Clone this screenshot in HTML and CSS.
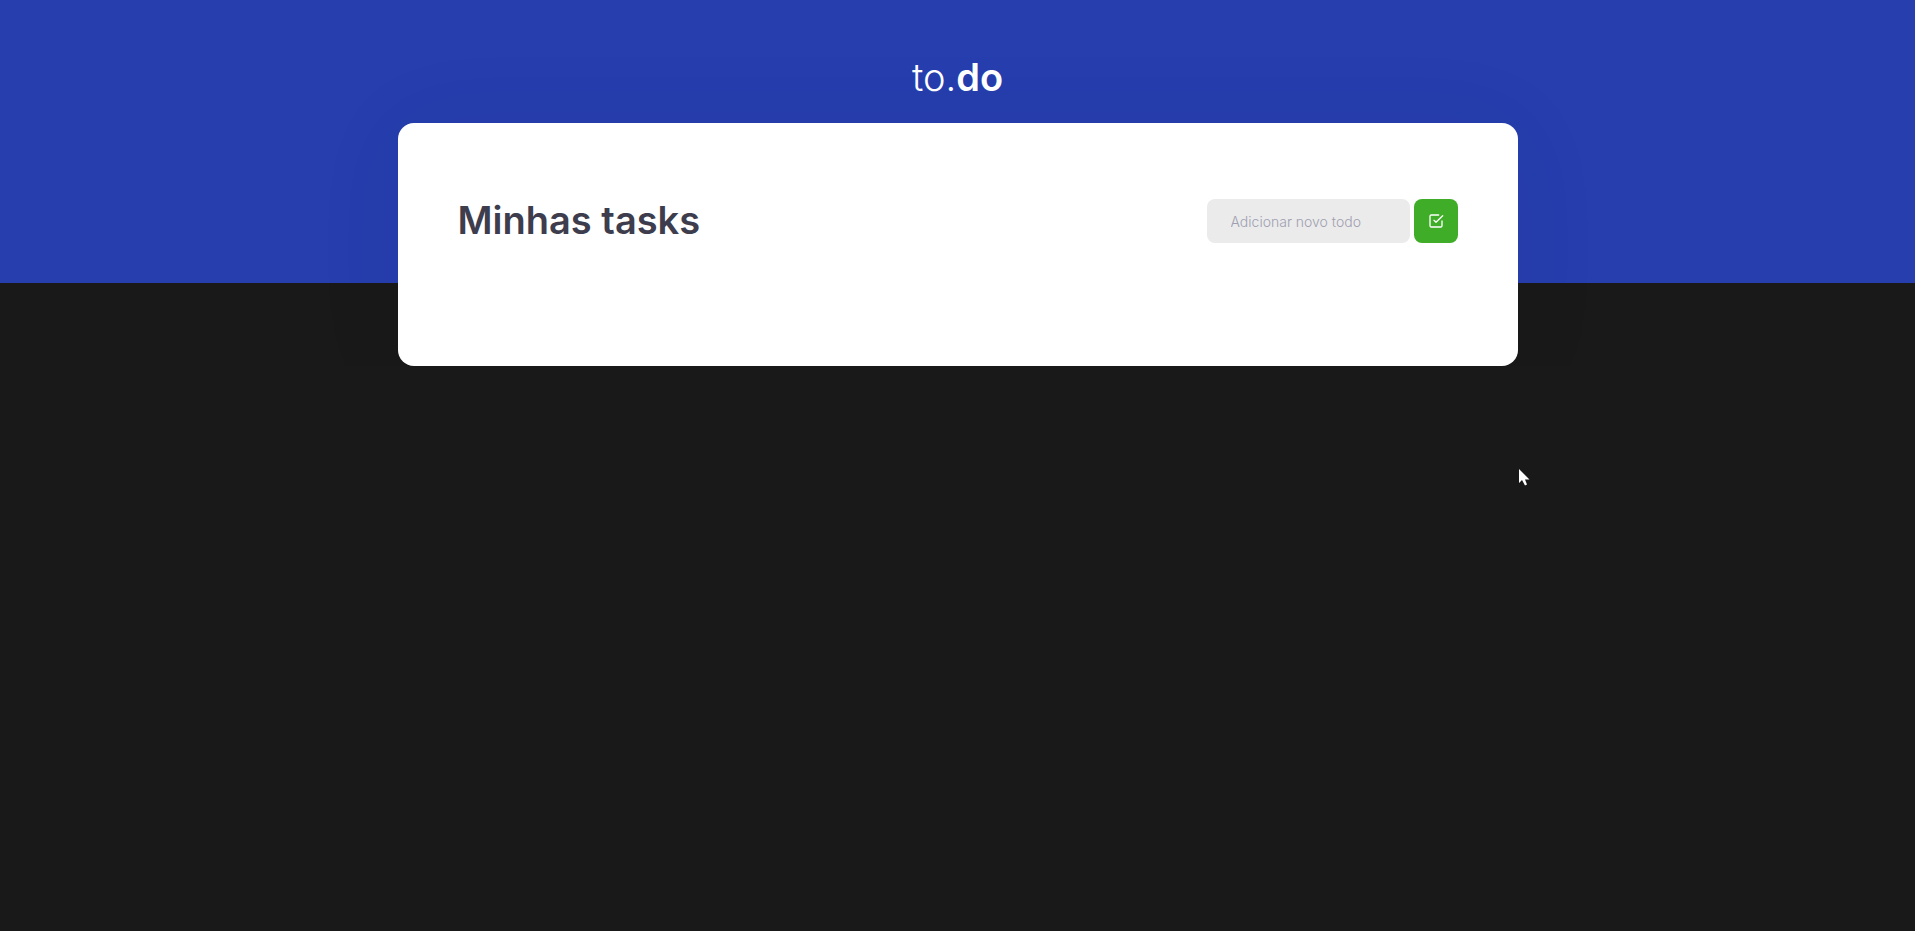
FILE: index.html
```html
<!DOCTYPE html>
<html lang="pt-BR">
<head>
  <meta charset="utf-8">
  <meta name="viewport" content="width=device-width, initial-scale=1">
  <title>to.do</title>
  <link rel="stylesheet" href="styles.css">
</head>
<body>
  <header class="header">
    <div class="logo">to.<strong>do</strong></div>
  </header>
  <main class="task-list">
    <h1 class="title">Minhas tasks</h1>
    <form class="task-form">
      <input class="task-input" type="text" placeholder="Adicionar novo todo" aria-label="Adicionar novo todo">
      <button class="task-submit" type="button" aria-label="Adicionar">
        <svg class="icon" viewBox="0 0 24 24" aria-hidden="true">
          <polyline points="9 11 12 14 22 4"/>
          <path d="M21 12v7a2 2 0 0 1-2 2H5a2 2 0 0 1-2-2V5a2 2 0 0 1 2-2h11"/>
        </svg>
      </button>
    </form>
  </main>
  <svg class="cursor" viewBox="0 0 12 18" aria-hidden="true">
    <path d="M0 0v14l3-3 3 5.500 2-1-2-5h4.500z"/>
  </svg>
</body>
</html>
```
FILE: styles.css
```css
* {
  margin: 0;
  padding: 0;
  box-sizing: border-box;
}

body {
  background: #191919;
  font-family: Inter, sans-serif;
  -webkit-font-smoothing: antialiased;
}

.header {
  height: 283px;
  padding-top: 54px;
  background: #263eae;
  text-align: center;
}

.logo {
  color: #fff;
  font-size: 38px;
  line-height: 46px;
  font-weight: 300;
}

.logo strong {
  font-weight: 600;
}

.task-list {
  display: flex;
  justify-content: space-between;
  align-items: flex-start;
  max-width: 1120px;
  min-height: 243px;
  margin: -160px auto 0;
  padding: 76px 60px 64px;
  border-radius: 16px;
  background: #fff;
  box-shadow: 0 4px 100px rgba(0, 0, 0, 0.05);
}

.title {
  color: #3d3d4d;
  font-size: 38px;
  line-height: 42px;
  font-weight: 600;
}

.task-form {
  display: flex;
  gap: 4px;
}

.task-input {
  width: 203px;
  height: 44px;
  padding: 0 24px;
  border: 0;
  border-radius: 8px;
  background: #ebebeb;
  color: #3d3d4d;
  font-family: inherit;
  font-size: 14px;
  font-weight: 300;
}

.task-input::placeholder {
  color: #a09fb1;
}

.task-submit {
  display: grid;
  place-items: center;
  width: 44px;
  height: 44px;
  border: 0;
  border-radius: 8px;
  background: #3fad27;
}

.icon {
  width: 16px;
  height: 16px;
  fill: none;
  stroke: #fff;
  stroke-width: 2;
  stroke-linecap: round;
  stroke-linejoin: round;
}

.cursor {
  position: absolute;
  top: 469px;
  left: 1519px;
  width: 12px;
  height: 18px;
  fill: #fff;
}
```
